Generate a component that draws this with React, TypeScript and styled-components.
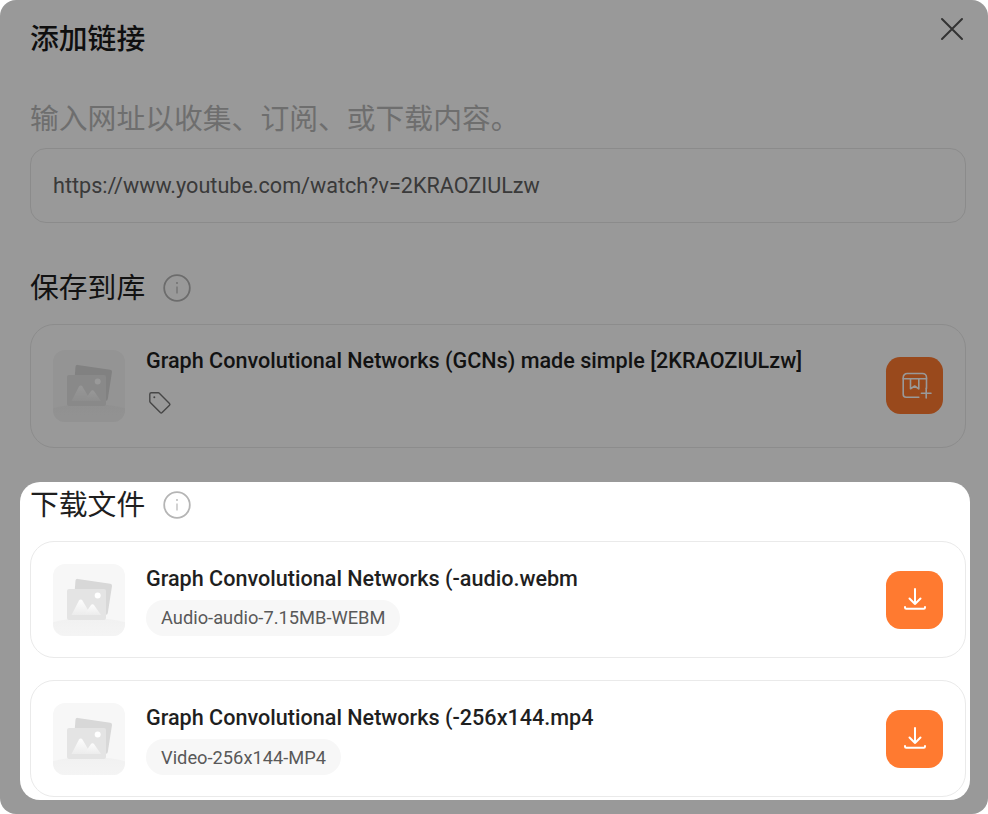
import React from "react";
import styled, { createGlobalStyle } from "styled-components";

const Global = createGlobalStyle`
  html, body { margin: 0; padding: 0; background: #fff; }
  body {
    font-family: Roboto, "Noto Sans CJK SC", sans-serif;
  }
  * { box-sizing: border-box; }
`;

const Dialog = styled.div`
  position: relative;
  width: 988px;
  height: 814px;
  padding: 0 22px 0 30px;
  background: #fff;
  overflow: hidden;
`;

const Dim = styled.div`
  position: absolute;
  inset: 0;
  border-radius: 16px;
  background: rgba(0, 0, 0, 0.4);
  z-index: 1;
`;

const Header = styled.header`
  display: flex;
  align-items: center;
  justify-content: space-between;
  height: 77px;
  padding-right: 2px;
`;

const Title = styled.h1`
  margin: 0;
  font-family: Roboto, "Noto Sans CJK SC", sans-serif;
  font-size: 28.8px;
  font-weight: 500;
  line-height: 40px;
  color: #1a1a1a;
`;

const CloseButton = styled.button`
  display: flex;
  width: 24px;
  height: 24px;
  padding: 0;
  margin-top: -20px;
  border: 0;
  background: none;
  color: #555;
`;

const Lead = styled.p`
  margin: 22px 0 0;
  font-size: 28.8px;
  font-weight: 400;
  line-height: 40px;
  color: #b8b8b8;
`;

const UrlField = styled.div`
  display: flex;
  align-items: center;
  height: 75px;
  margin-top: 8.5px;
  padding: 0 22px;
  border: 1px solid #e8e8e8;
  border-radius: 16px;
  font-size: 21.6px;
  color: #616161;
`;

const SectionHead = styled.div`
  display: flex;
  align-items: center;
  gap: 18px;
  height: 40px;
`;

const SectionTitle = styled.h2`
  margin: 0;
  font-size: 28.8px;
  font-weight: 400;
  line-height: 40px;
  color: #1f1f1f;
`;

const SaveSection = styled.section`
  margin-top: 45px;
`;

const Highlight = styled.section`
  position: relative;
  z-index: 2;
  height: 317.5px;
  margin: 34.5px -4px 0 -10px;
  padding: 3px 4px 0 10px;
  border-radius: 20px;
  background: #fff;
`;

const Card = styled.div<{ $tall?: boolean; $gap: number }>`
  display: flex;
  align-items: center;
  height: ${(p) => (p.$tall ? 124 : 116.7)}px;
  margin-top: ${(p) => p.$gap}px;
  padding: ${(p) => (p.$tall ? 0 : 1)}px 22px 0;
  border: 1px solid #eaeaea;
  border-radius: 24px;
`;

const Thumb = styled.svg`
  flex: none;
  width: 72px;
  height: 72px;
`;

const Body = styled.div<{ $tall?: boolean }>`
  flex: 1;
  min-width: 0;
  margin-left: 21px;
  margin-bottom: ${(p) => (p.$tall ? 10 : 0)}px;
`;

const FileName = styled.div`
  font-size: 21.6px;
  font-weight: 500;
  line-height: 29px;
  color: #1f1f1f;
`;

const Chip = styled.span`
  display: inline-flex;
  align-items: center;
  height: 36px;
  margin-top: 7px;
  padding: 0 15px;
  border-radius: 18px;
  background: #f7f7f7;
  font-size: 18.3px;
  color: #595959;
  vertical-align: top;
`;

const TagRow = styled.div`
  display: flex;
  margin: 15.5px 0 0 2px;
  color: #757575;
`;

const ActionButton = styled.button`
  display: flex;
  flex: none;
  align-items: center;
  justify-content: center;
  width: 57px;
  height: 57.6px;
  padding: 0;
  border: 0;
  border-radius: 14.4px;
  background: #ff7a30;
  color: #fff;
`;

const InfoIcon = () => (
  <svg width="28" height="28" viewBox="0 0 28 28" fill="none">
    <circle cx="14" cy="14" r="12.8" stroke="#b5b5b5" strokeWidth="1.8" />
    <path d="M14 12.500v7" stroke="#b5b5b5" strokeWidth="1.200" />
    <circle cx="14" cy="9" r="0.900" fill="#b5b5b5" />
  </svg>
);

const ThumbIcon = ({ id }: { id: string }) => (
  <Thumb viewBox="0 0 72 72">
    <defs>
      <clipPath id={`${id}c`}>
        <rect width="72" height="72" rx="12" />
      </clipPath>
      <linearGradient id={`${id}g`} x1="0" y1="0" x2="0" y2="1">
        <stop offset="0" stopColor="#fdfdfd" />
        <stop offset="1" stopColor="#ececec" />
      </linearGradient>
      <linearGradient id={`${id}b`} x1="0" y1="0" x2="0" y2="1">
        <stop offset="0" stopColor="#f1f1f1" />
        <stop offset="1" stopColor="#f7f7f7" />
      </linearGradient>
    </defs>
    <g clipPath={`url(#${id}c)`}>
      <rect width="72" height="72" fill="#f7f7f7" />
      <ellipse cx="36" cy="71" rx="54" ry="17" fill={`url(#${id}b)`} />
    </g>
    <path
      d="M22.500 16.500a2 2 0 0 1 2.300-1.600l32.500 4.800a2 2 0 0 1 1.700 2.300l-4.200 27a2 2 0 0 1-2.300 1.700L20 48z"
      fill="#d8d8d8"
    />
    <rect x="14" y="25" width="39" height="31" rx="2" fill="#e4e4e4" />
    <circle cx="44.700" cy="31.500" r="3" fill="#fff" />
    <path d="M18.500 51l7.500-14.500a2 2 0 0 1 3.400 0L38 51z" fill={`url(#${id}g)`} />
    <path d="M31 51l7-10a1.800 1.800 0 0 1 3 0l7 10z" fill={`url(#${id}g)`} />
  </Thumb>
);

const TagIcon = () => (
  <svg width="24" height="24" viewBox="0 0 24 24" fill="none" stroke="currentColor" strokeWidth="1.4" strokeLinejoin="round">
    <path d="M1.800 3.300a1.500 1.500 0 0 1 1.500-1.500h7c.4 0 .7.100 1 .4l10.200 10.200a1.300 1.300 0 0 1 0 1.800l-7.400 7.400a1.300 1.300 0 0 1-1.800 0L2.300 11.400a1.400 1.400 0 0 1-.5-1z" />
    <circle cx="6.300" cy="6.300" r="1" fill="currentColor" stroke="none" />
  </svg>
);

const LibrarySvg = styled.svg`
  overflow: visible;
`;

const LibraryIcon = () => (
  <LibrarySvg width="30" height="30" viewBox="0 0 30 30" fill="none" stroke="currentColor" strokeWidth="1.6" strokeLinecap="round" strokeLinejoin="round">
    <path d="M18.800 26.200H6.200a3 3 0 0 1-3-3V6.500a4 4 0 0 1 4-4h15.300a4 4 0 0 1 4 4V17.500" />
    <path d="M3.200 7.800h23.300" />
    <path d="M10.500 7.800v10l4.150-2.800 4.150 2.800V7.800" />
    <path d="M26.200 17.400v9.600M21.400 22.200h9.600" />
  </LibrarySvg>
);

const DownloadIcon = () => (
  <svg width="24" height="24" viewBox="0 0 24 24" fill="none" stroke="currentColor" strokeWidth="2" strokeLinecap="round" strokeLinejoin="round">
    <path d="M12 1v15M6.500 10.500L12 16l5.500-5.500" />
    <path d="M2 19v.5a1.200 1.200 0 0 0 1.200 1.200h17.600a1.200 1.200 0 0 0 1.200-1.200V19" />
  </svg>
);

const files = [
  { name: "Graph Convolutional Networks (-audio.webm", meta: "Audio-audio-7.15MB-WEBM", gap: 16 },
  { name: "Graph Convolutional Networks (-256x144.mp4", meta: "Video-256x144-MP4", gap: 22.7 },
];

export default function App() {
  return (
    <>
      <Global />
      <Dialog>
        <Dim />
        <Header>
          <Title>添加链接</Title>
          <CloseButton aria-label="关闭">
            <svg width="24" height="24" viewBox="0 0 24 24" fill="none" stroke="currentColor" strokeWidth="2" strokeLinecap="round">
              <path d="M2 2l20 20M22 2L2 22" />
            </svg>
          </CloseButton>
        </Header>
        <Lead>输入网址以收集、订阅、或下载内容。</Lead>
        <UrlField>https://www.youtube.com/watch?v=2KRAOZIULzw</UrlField>
        <SaveSection>
          <SectionHead>
            <SectionTitle>保存到库</SectionTitle>
            <InfoIcon />
          </SectionHead>
          <Card $tall $gap={16}>
            <ThumbIcon id="t0" />
            <Body $tall>
              <FileName>Graph Convolutional Networks (GCNs) made simple [2KRAOZIULzw]</FileName>
              <TagRow>
                <TagIcon />
              </TagRow>
            </Body>
            <ActionButton aria-label="保存">
              <LibraryIcon />
            </ActionButton>
          </Card>
        </SaveSection>
        <Highlight>
          <SectionHead>
            <SectionTitle>下载文件</SectionTitle>
            <InfoIcon />
          </SectionHead>
          {files.map((f, i) => (
            <Card key={f.name} $gap={f.gap}>
              <ThumbIcon id={`f${i}`} />
              <Body>
                <FileName>{f.name}</FileName>
                <Chip>{f.meta}</Chip>
              </Body>
              <ActionButton aria-label="下载">
                <DownloadIcon />
              </ActionButton>
            </Card>
          ))}
        </Highlight>
      </Dialog>
    </>
  );
}
